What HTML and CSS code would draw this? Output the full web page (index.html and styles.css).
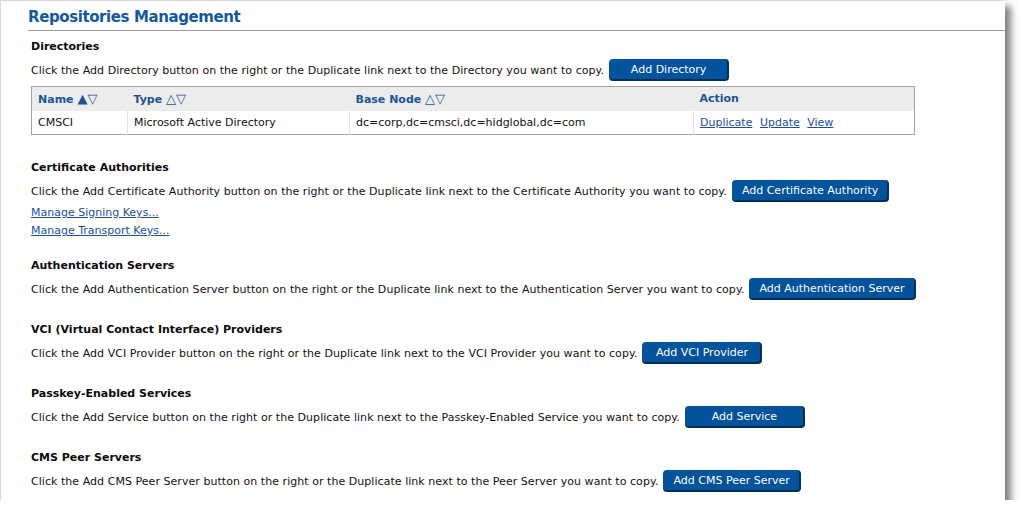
FILE: index.html
```html
<!DOCTYPE html>
<html>
<head>
<meta charset="utf-8">
<link rel="stylesheet" href="styles.css">
</head>
<body>
<div class="panel">
  <h1 class="title">Repositories Management</h1>
  <div class="content">
    <section class="group group-dir">
      <h2 class="group-title">Directories</h2>
      <div class="row"><span class="desc">Click the Add Directory button on the right or the Duplicate link next to the Directory you want to copy.</span><button class="btn">Add Directory</button></div>
      <table class="grid">
        <colgroup><col class="c1"><col class="c2"><col class="c3"><col class="c4"></colgroup>
        <thead>
          <tr><th>Name <span class="arr">▲▽</span></th><th>Type <span class="arr">△▽</span></th><th>Base Node <span class="arr">△▽</span></th><th>Action</th></tr>
        </thead>
        <tbody>
          <tr><td>CMSCI</td><td>Microsoft Active Directory</td><td>dc=corp,dc=cmsci,dc=hidglobal,dc=com</td><td><a href="#">Duplicate</a> <a href="#">Update</a> <a href="#">View</a></td></tr>
        </tbody>
      </table>
    </section>
    <section class="group">
      <h2 class="group-title">Certificate Authorities</h2>
      <div class="row"><span class="desc">Click the Add Certificate Authority button on the right or the Duplicate link next to the Certificate Authority you want to copy.</span><button class="btn">Add Certificate Authority</button></div>
      <div class="links">
        <a href="#">Manage Signing Keys...</a>
        <a href="#">Manage Transport Keys...</a>
      </div>
    </section>
    <section class="group">
      <h2 class="group-title">Authentication Servers</h2>
      <div class="row"><span class="desc">Click the Add Authentication Server button on the right or the Duplicate link next to the Authentication Server you want to copy.</span><button class="btn">Add Authentication Server</button></div>
    </section>
    <section class="group">
      <h2 class="group-title">VCI (Virtual Contact Interface) Providers</h2>
      <div class="row"><span class="desc">Click the Add VCI Provider button on the right or the Duplicate link next to the VCI Provider you want to copy.</span><button class="btn">Add VCI Provider</button></div>
    </section>
    <section class="group">
      <h2 class="group-title">Passkey-Enabled Services</h2>
      <div class="row"><span class="desc">Click the Add Service button on the right or the Duplicate link next to the Passkey-Enabled Service you want to copy.</span><button class="btn">Add Service</button></div>
    </section>
    <section class="group">
      <h2 class="group-title">CMS Peer Servers</h2>
      <div class="row"><span class="desc">Click the Add CMS Peer Server button on the right or the Duplicate link next to the Peer Server you want to copy.</span><button class="btn">Add CMS Peer Server</button></div>
    </section>
  </div>
</div>
</body>
</html>
```

FILE: styles.css
```css
* { box-sizing: border-box; }
html, body { margin: 0; padding: 0; background: #fff; }
body {
  font-family: "DejaVu Sans", Verdana, sans-serif;
  font-size: 11px;
  color: #111;
}
.panel {
  width: 1005px;
  height: 500px;
  background: #fff;
  border-top: 1px solid #d8d8d8;
  border-left: 1px solid #d8d8d8;
  box-shadow: 6px 6px 7px rgba(0,0,0,0.5);
  padding: 7px 0 0 27px;
}
.title {
  margin: 0;
  font-size: 15px;
  letter-spacing: -0.4px;
  font-weight: bold;
  color: #15589c;
  line-height: 19px;
  padding-bottom: 3px;
  border-bottom: 1px solid #9a9a9a;
}
.content {
  padding: 9px 0 0 3px;
  display: flex;
  flex-direction: column;
  gap: 23px;
}
.group { display: flex; flex-direction: column; }
.group-title {
  margin: 0;
  font-size: 11px;
  font-weight: bold;
  line-height: 14px;
  color: #0a0a0a;
}
.row {
  margin-top: 5px;
  display: flex;
  align-items: center;
  gap: 5px;
  height: 22px;
}
.desc { letter-spacing: 0.045px; }
.btn {
  font-family: "DejaVu Sans", Verdana, sans-serif;
  font-size: 11px;
  color: #fff;
  background: #02529c;
  border: 0;
  border-right: 2px solid #062f57;
  border-bottom: 2px solid #062f57;
  border-radius: 4px;
  min-width: 120px;
  height: 22px;
  padding: 1px 9px 0 10px;
  line-height: 18px;
}
.grid {
  margin-top: 5px;
  margin-bottom: 3px;
  width: 883px;
  border-collapse: collapse;
  border: 1px solid #a3a3a3;
  table-layout: fixed;
}
.c1 { width: 96px; }
.c2 { width: 222px; }
.c3 { width: 344px; }
.c4 { width: 221px; }
.grid th {
  background: #ececec;
  color: #1d5592;
  font-weight: bold;
  text-align: left;
  height: 24px;
  padding: 0 6px;
}
.arr { font-weight: normal; font-size: 13px; }
.grid td {
  height: 24px;
  padding: 0 6px;
  border-left: 1px solid #e2e2e2;
}
.grid td:first-child { border-left: 0; }
a { color: #1c4f95; text-decoration: underline; }
.grid td a { margin-right: 4px; }
.links {
  display: flex;
  flex-direction: column;
  align-items: flex-start;
  margin-top: 2px;
  margin-bottom: -4px;
  line-height: 18px;
}
```
